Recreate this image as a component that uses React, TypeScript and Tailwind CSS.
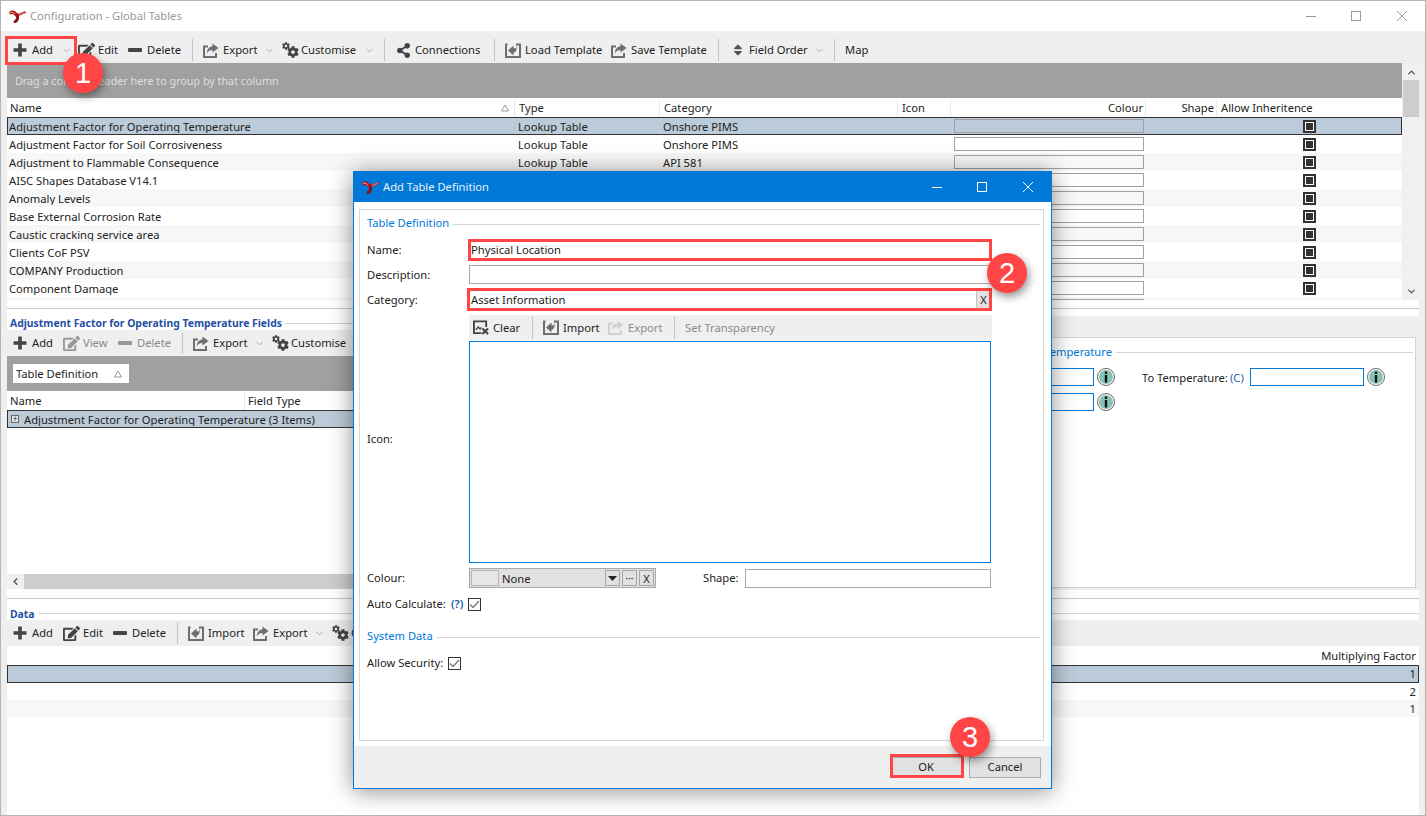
import React from "react";
import { ChevronDown, ChevronUp, ChevronLeft } from "lucide-react";
import { FaEdit, FaCog, FaShareAlt, FaSort } from "react-icons/fa";

const topCols = "grid-cols-[508px_145px_238px_53px_195px_71px_185px]";

const rows = [
  ["Adjustment Factor for Operating Temperature", "Lookup Table", "Onshore PIMS"],
  ["Adjustment Factor for Soil Corrosiveness", "Lookup Table", "Onshore PIMS"],
  ["Adjustment to Flammable Consequence", "Lookup Table", "API 581"],
  ["AISC Shapes Database V14.1", "Lookup Table", "Structural"],
  ["Anomaly Levels", "Lookup Table", "Inspection"],
  ["Base External Corrosion Rate", "Lookup Table", "API 581"],
  ["Caustic cracking service area", "Lookup Table", "Onshore PIMS"],
  ["Clients CoF PSV", "Lookup Table", "PSV"],
  ["COMPANY Production", "Lookup Table", "Production"],
  ["Component Damage", "Lookup Table", "API 581"],
  ["Component Types", "Lookup Table", "API 581"],
];

// Small hand drawn toolbar glyphs
const ExportIcon = ({ muted }: { muted?: boolean }) => (
  <svg width="16" height="15" viewBox="0 0 16 15" className={muted ? "text-[#b5b5b5]" : "text-[#6e6e6e]"}>
    <path d="M5 3.5H1v10.500h12v-4" fill="none" stroke="currentColor" strokeWidth="2" />
    <path d="M9.5 0.5 15.500 5 9.500 9.500V7C6.800 7 5 8 3.800 10.500 4 6.500 6 3.600 9.500 3.200Z" fill="currentColor" />
  </svg>
);

const LoadIcon = () => (
  <svg width="16" height="15" viewBox="0 0 16 15" className="text-[#6e6e6e]">
    <path d="M11 1.500h4v12.500H1V1.500h1.500" fill="none" stroke="currentColor" strokeWidth="2" />
    <path d="M3 7.500 8.500 2.500V5.300H11V2c1.500 4.500 0 7.300-2.500 7.700v2.800Z" fill="currentColor" />
  </svg>
);

const ClearIcon = () => (
  <svg width="17" height="15" viewBox="0 0 17 15" className="text-[#444]">
    <path d="M9 13.500H1V1h13v6" fill="none" stroke="currentColor" strokeWidth="2" />
    <path d="M3 10l2.500-3 2 2 1.500-1.500" fill="none" stroke="currentColor" strokeWidth="1.500" />
    <path d="M10 8.500l6 6M16 8.500l-6 6" stroke="currentColor" strokeWidth="2.200" />
  </svg>
);

const Logo = () => (
  <svg width="17" height="13" viewBox="0 0 17 13" className="shrink-0">
    <path d="M2 2.500C4 1.500 6 3 7.500 5" fill="none" stroke="#b8141c" strokeWidth="3.600" strokeLinecap="round" />
    <path d="M7.500 5C10 5.500 12.500 3.500 15.800 2.300" fill="none" stroke="#c8202a" strokeWidth="2.200" strokeLinecap="round" />
    <path d="M8.500 5C9 8 8.500 10.500 6 11.800" fill="none" stroke="#8e1016" strokeWidth="2.800" strokeLinecap="round" />
    <path d="M1.500 2.300C3 1.800 4.500 2.500 5.500 3.600" fill="none" stroke="#f4c4c6" strokeWidth="0.900" strokeLinecap="round" />
    <path d="M10 4.600C11.500 4.200 13 3.300 15 2.500" fill="none" stroke="#f4c4c6" strokeWidth="0.700" strokeLinecap="round" />
  </svg>
);

const InfoIcon = () => (
  <svg width="18" height="18" viewBox="0 0 18 18" className="shrink-0">
    <circle cx="9" cy="9" r="8.500" fill="#fff" stroke="#666" />
    <circle cx="9" cy="9" r="7" fill="#88c2b6" />
    <rect x="7.800" y="3.500" width="2.400" height="2.400" fill="#111" />
    <rect x="7.800" y="7" width="2.400" height="7.500" fill="#111" />
  </svg>
);

const SortArrow = () => (
  <svg width="8" height="8" viewBox="0 0 8 8">
    <path d="M4 1 7.500 7H.5Z" fill="#fff" stroke="#999" />
  </svg>
);

const WindowControls = ({ color }: { color: string }) => (
  <div className={`ml-auto flex items-center mr-[18px] ${color}`}>
    <div className="w-[10px] h-px bg-current" />
    <div className="ml-[35px] w-[10px] h-[10px] border border-current" />
    <svg width="10" height="10" viewBox="0 0 10 10" className="ml-[36px]">
      <path d="M0 0 10 10M10 0 0 10" stroke="currentColor" strokeWidth="1" />
    </svg>
  </div>
);

const Chevron = ({ className }: { className: string }) => (
  <ChevronDown size={11} strokeWidth={1.4} className={`ml-auto text-[#8a8a8a] ${className}`} />
);

interface ToolProps {
  icon: React.ReactNode;
  label: string;
  box?: string;
  width: string;
  chevron?: string;
  disabled?: boolean;
}

const Tool = ({ icon, label, box = "w-[16px]", width, chevron, disabled }: ToolProps) => (
  <div className={`flex items-center shrink-0 ${width}`}>
    <span className={`flex items-center shrink-0 ${box} ${disabled ? "opacity-50" : ""}`}>{icon}</span>
    <span className={`ml-[4px] whitespace-nowrap ${disabled ? "text-[#8a8a8a]" : ""}`}>{label}</span>
    {chevron && <Chevron className={chevron} />}
  </div>
);

const Sep = ({ after }: { after: string }) => <div className={`w-px h-[22px] bg-[#c4c4c4] shrink-0 ${after}`} />;

const Plus = () => (
  <svg width="14" height="14" viewBox="0 0 14 14" className="text-[#444]">
    <path d="M5.200 0.500h3.600v4.700h4.700v3.600H8.800v4.700H5.200V8.800H0.500V5.200h4.700Z" fill="currentColor" />
  </svg>
);
const Dash = () => (
  <svg width="14" height="4" viewBox="0 0 14 4" className="text-[#444]">
    <rect width="14" height="4" rx="1" fill="currentColor" />
  </svg>
);
const Edit = () => <FaEdit size={17} className="text-[#444] shrink-0" />;
const Cogs = () => (
  <svg width="17" height="16" viewBox="0 0 17 16" className="text-[#444] shrink-0">
    <FaCog size={8} x={0} y={0} />
    <FaCog size={12} x={5} y={4} />
  </svg>
);

const TopToolbar = () => (
  <div className="h-[32px] flex items-center pl-[12px] pt-[6px] shrink-0">
    <Tool icon={<Plus />} box="w-[15px]" label="Add" width="w-[65px]" chevron="mr-[6px]" />
    <Tool icon={<Edit />} label="Edit" width="w-[50px]" />
    <Tool icon={<Dash />} box="w-[15px]" label="Delete" width="w-[64px]" />
    <Sep after="mr-[10px]" />
    <Tool icon={<ExportIcon />} label="Export" width="w-[79px]" chevron="mr-[7px]" />
    <Tool icon={<Cogs />} box="w-[15px]" label="Customise" width="w-[102px]" chevron="mr-[9px]" />
    <Sep after="mr-[11px]" />
    <Tool icon={<FaShareAlt size={15} className="text-[#444]" />} box="w-[15px]" label="Connections" width="w-[98px]" />
    <Sep after="mr-[10px]" />
    <Tool icon={<LoadIcon />} label="Load Template" width="w-[106px]" />
    <Tool icon={<ExportIcon />} label="Save Template" width="w-[107px]" />
    <Sep after="mr-[14px]" />
    <Tool icon={<FaSort size={14} className="text-[#555] -ml-[2px] shrink-0" />} box="w-[12px]" label="Field Order" width="w-[101px]" chevron="mr-[9px]" />
    <Sep after="mr-[10px]" />
    <span>Map</span>
  </div>
);

const FieldsToolbar = () => (
  <div className="h-[26px] shrink-0 flex items-center pl-[6px] bg-[#efefef] overflow-hidden">
    <Tool icon={<Plus />} box="w-[15px]" label="Add" width="w-[50px]" />
    <Tool icon={<Edit />} label="View" width="w-[55px]" disabled />
    <Tool icon={<Dash />} box="w-[15px]" label="Delete" width="w-[64px]" disabled />
    <Sep after="mr-[10px]" />
    <Tool icon={<ExportIcon />} label="Export" width="w-[79px]" chevron="mr-[7px]" />
    <Tool icon={<Cogs />} box="w-[15px]" label="Customise" width="w-[102px]" />
  </div>
);

const DataToolbar = () => (
  <div className="h-[26px] flex items-center pl-[6px] shrink-0">
    <Tool icon={<Plus />} box="w-[15px]" label="Add" width="w-[50px]" />
    <Tool icon={<Edit />} label="Edit" width="w-[50px]" />
    <Tool icon={<Dash />} box="w-[15px]" label="Delete" width="w-[64px]" />
    <Sep after="mr-[10px]" />
    <Tool icon={<LoadIcon />} label="Import" width="w-[65px]" />
    <Tool icon={<ExportIcon />} label="Export" width="w-[79px]" chevron="mr-[7px]" />
    <Tool icon={<Cogs />} box="w-[15px]" label="Customise" width="w-[102px]" />
  </div>
);

const RowCheck = () => (
  <div className="w-[13px] h-[13px] border-2 border-[#333] bg-white flex items-center justify-center">
    <div className="w-[7px] h-[7px] bg-[#333]" />
  </div>
);

const TableRow = ({ row, index }: { row: string[]; index: number }) => {
  const selected = index === 0;
  const bg = selected ? "bg-[#bccbd9]" : index % 2 === 0 ? "bg-[#f7f7f7]" : "bg-white";
  return (
    <div className={`grid ${topCols} h-[18px] shrink-0 items-center relative ${bg}`}>
      <div className="pl-[2px] h-[14px] leading-[15px] overflow-hidden whitespace-nowrap">{row[0]}</div>
      <div className="pl-[3px] h-[14px] leading-[15px] overflow-hidden whitespace-nowrap">{row[1]}</div>
      <div className="pl-[3px] h-[14px] leading-[15px] overflow-hidden whitespace-nowrap">{row[2]}</div>
      <div />
      <div className="px-[3px]">
        <div className={`h-[14px] w-[190px] border border-[#a0a0a0] ${bg}`} />
      </div>
      <div />
      <div className="pl-[86px]">
        <RowCheck />
      </div>
      {selected && <div className="absolute inset-0 border border-[#333]" />}
    </div>
  );
};

const TopGrid = () => (
  <div className="h-[237px] flex shrink-0">
    <div className="w-[1395px] flex flex-col overflow-hidden bg-white">
      <div className="h-[35px] shrink-0 bg-[#a0a0a0] text-[#dedede] text-[10.75px] pl-[8px] pt-px flex items-center">
        Drag a column header here to group by that column
      </div>
      <div className={`grid ${topCols} h-[19px] shrink-0 bg-white items-stretch pt-px`}>
        <div className="pl-[3px] pr-[5px] border-r border-[#e8e8e8] flex items-center justify-between">
          <span>Name</span>
          <SortArrow />
        </div>
        <div className="pl-[4px] border-r border-[#e8e8e8] flex items-center">Type</div>
        <div className="pl-[4px] border-r border-[#e8e8e8] flex items-center">Category</div>
        <div className="pl-[4px] border-r border-[#e8e8e8] flex items-center">Icon</div>
        <div className="pr-[2px] border-r border-[#e8e8e8] flex items-center justify-end">Colour</div>
        <div className="pr-[2px] border-r border-[#e8e8e8] flex items-center justify-end">Shape</div>
        <div className="pl-[4px] flex items-center whitespace-nowrap">Allow Inheritence</div>
      </div>
      {rows.map((row, i) => (
        <TableRow key={row[0]} row={row} index={i} />
      ))}
    </div>
    <div className="w-[16px] ml-px bg-[#f0f0f0] flex flex-col items-center">
      <ChevronUp size={11} strokeWidth={3} className="text-[#555] mt-[4px]" />
      <div className="w-full h-[37px] bg-[#cdcdcd] mt-[2px]" />
      <ChevronDown size={11} strokeWidth={3} className="text-[#555] mt-auto mb-[3px]" />
    </div>
  </div>
);

const FieldsPane = () => (
  <div className="w-[360px] shrink-0 bg-white flex flex-col">
    <div className="h-[14px] shrink-0 flex items-center overflow-hidden">
      <span className="pl-[3px] pt-px font-bold text-[10.4px] text-[#1f4fa3] whitespace-nowrap">
        Adjustment Factor for Operating Temperature Fields
      </span>
      <div className="flex-1 h-px bg-[#d4d4d4] ml-[3px]" />
    </div>
    <FieldsToolbar />
    <div className="h-[35px] shrink-0 bg-[#a0a0a0] pl-[6px] flex items-center">
      <div className="w-[116px] h-[19px] bg-white flex items-center justify-between pl-[3px] pr-[7px]">
        <span>Table Definition</span>
        <SortArrow />
      </div>
    </div>
    <div className="h-[19px] shrink-0 flex pt-px">
      <div className="w-[238px] pl-[3px] border-r border-[#e8e8e8] flex items-center">Name</div>
      <div className="pl-[3px] flex items-center">Field Type</div>
    </div>
    <div className="h-[18px] shrink-0 bg-[#bccbd9] border border-[#333] flex items-center pl-[3px]">
      <div className="w-[8px] h-[8px] border border-[#666] bg-[#e8e8e8] flex items-center justify-center text-[8px] leading-none">
        +
      </div>
      <span className="ml-[5px] h-[14px] leading-[15px] overflow-hidden whitespace-nowrap">
        Adjustment Factor for Operating Temperature
      </span>
      <span className="ml-[3px] h-[14px] leading-[15px] overflow-hidden whitespace-nowrap">(3 Items)</span>
    </div>
    <div className="flex-1" />
    <div className="h-[15px] shrink-0 flex bg-[#f0f0f0] mb-px">
      <div className="w-[17px] flex items-center justify-center">
        <ChevronLeft size={11} strokeWidth={3} className="text-[#555]" />
      </div>
      <div className="flex-1 bg-[#cdcdcd]" />
    </div>
  </div>
);

const DetailPane = () => (
  <div className="flex-1 pt-[21px] pr-[3px]">
    <div className="h-[251px] bg-white border border-[#d4d4d4] pl-[6px] pr-[2px]">
      <div className="h-[28px] flex items-center">
        <span className="w-[738px] text-right text-[#0078d7] whitespace-nowrap">Adjustment Factor for Operating Temperature</span>
        <div className="flex-1 h-px bg-[#d4d4d4] ml-[4px]" />
      </div>
      <div className="flex items-center h-[18px] mt-[2px] pl-[606px]">
        <div className="w-[114px] h-[18px] border border-[#0078d7] shrink-0" />
        <span className="ml-[3px]"><InfoIcon /></span>
        <span className="ml-[27px] w-[88px] whitespace-nowrap pt-px">To Temperature:</span>
        <span className="text-[#1f5fa8] w-[20px] pt-px">(C)</span>
        <div className="w-[114px] h-[18px] border border-[#0078d7] shrink-0" />
        <span className="ml-[3px]"><InfoIcon /></span>
      </div>
      <div className="flex items-center h-[18px] mt-[7px] pl-[606px]">
        <div className="w-[114px] h-[18px] border border-[#0078d7] shrink-0" />
        <span className="ml-[3px]"><InfoIcon /></span>
      </div>
    </div>
  </div>
);

const DataGrid = () => (
  <div className="flex-1 bg-white flex flex-col">
    <div className="h-[19px] shrink-0 flex items-center justify-end pr-[3px]">Multiplying Factor</div>
    <div className="h-[18px] shrink-0 bg-[#bccbd9] border border-[#333] flex items-center justify-end pr-[2px]">1</div>
    <div className="h-[17px] shrink-0 flex items-center justify-end pr-[3px]">2</div>
    <div className="h-[17px] shrink-0 bg-[#f7f7f7] flex items-center justify-end pr-[3px]">1</div>
  </div>
);

const Legend = ({ title, className }: { title: string; className: string }) => (
  <div className={`flex items-center h-[14px] ${className}`}>
    <span className="text-[#0078d7] whitespace-nowrap">{title}</span>
    <div className="flex-1 h-px bg-[#d4d4d4] ml-[4px] mt-[2px]" />
  </div>
);

const FormRow = ({ label, className, children }: { label: string; className?: string; children: React.ReactNode }) => (
  <div className={`flex items-center ${className ?? ""}`}>
    <span className="w-[102px] shrink-0">{label}</span>
    {children}
  </div>
);

const DialogCheck = () => (
  <div className="w-[13px] h-[13px] border border-[#333] bg-white flex items-center justify-center shrink-0">
    <svg width="11" height="9" viewBox="0 0 11 9"><path d="M1 4.500 4 7.500 10 1" fill="none" stroke="#777" strokeWidth="1.300" /></svg>
  </div>
);

const Dialog = () => (
  <div className="absolute left-[352px] top-[170px] w-[699px] h-[618px] bg-white border border-[#0078d7] shadow-[0_2px_22px_rgba(0,0,0,0.45)] flex flex-col">
    <div className="h-[30px] shrink-0 bg-[#0078d7] flex items-center pl-[8px]">
      <Logo />
      <span className="ml-[4px] text-[#e8f2fb]">Add Table Definition</span>
      <WindowControls color="text-white" />
    </div>
    <div className="flex-1 pt-[7px] pl-[5px] pr-[7px] pb-[5px] bg-white">
      <div className="h-[532px] border border-[#d8d8d8] pl-[7px] pr-[3px] pt-[6px]">
        <Legend title="Table Definition" className="" />
        <FormRow label="Name:" className="mt-[10px]">
          <div className="w-[522px] h-[19px] border border-[#c4c4c4] pl-[1px] flex items-center">Physical Location</div>
        </FormRow>
        <FormRow label="Description:" className="mt-[6px]">
          <div className="w-[522px] h-[19px] border border-[#a8a8a8]" />
        </FormRow>
        <FormRow label="Category:" className="mt-[6px]">
          <div className="w-[522px] h-[19px] border border-[#0078d7] pl-[1px] flex items-center justify-between">
            <span>Asset Information</span>
            <div className="w-[14px] h-[17px] bg-[#e1e1e1] border-l border-[#c4c4c4] flex items-center justify-center text-[11px]">
              X
            </div>
          </div>
        </FormRow>
        <FormRow label="Icon:" className="mt-[6px]">
          <div className="w-[523px] shrink-0">
            <div className="h-[25px] bg-[#efefef] flex items-center pl-[4px]">
              <Tool icon={<ClearIcon />} label="Clear" width="w-[59px]" />
              <Sep after="mr-[10px]" />
              <Tool icon={<LoadIcon />} label="Import" width="w-[65px]" />
              <Tool icon={<ExportIcon muted />} label="Export" width="w-[66px]" disabled />
              <Sep after="mr-[10px]" />
              <span className="text-[#8a8a8a]">Set Transparency</span>
            </div>
            <div className="h-[222px] mt-px w-[522px] border border-[#0078d7]" />
          </div>
        </FormRow>
        <FormRow label="Colour:" className="mt-[5px]">
          <div className="w-[187px] h-[20px] bg-[#e1e1e1] border border-[#a8a8a8] flex items-center pl-[1px] shrink-0">
            <div className="w-[28px] h-[16px] bg-[#e6e6e6] border border-[#b8b8b8]" />
            <span className="ml-[3px] pt-px">None</span>
            <div className="ml-auto w-[15px] h-[16px] border border-[#a8a8a8] flex items-center justify-center">
              <svg width="9" height="5" viewBox="0 0 9 5"><path d="M0 0h9L4.500 5Z" fill="#222" /></svg>
            </div>
            <div className="ml-[2px] w-[15px] h-[16px] border border-[#a8a8a8] flex items-center justify-center text-[10px] leading-none">
              ···
            </div>
            <div className="ml-[2px] mr-[1px] w-[15px] h-[16px] border border-[#a8a8a8] flex items-center justify-center text-[11px]">
              X
            </div>
          </div>
          <span className="ml-[47px] w-[42px]">Shape:</span>
          <div className="w-[246px] h-[19px] border border-[#a8a8a8]" />
        </FormRow>
        <div className="flex items-center mt-[8px] h-[16px]">
          <span className="w-[84px] whitespace-nowrap">Auto Calculate:</span>
          <span className="w-[17px] text-[#1f5fa8] font-semibold">(?)</span>
          <DialogCheck />
        </div>
        <Legend title="System Data" className="mt-[17px]" />
        <div className="flex items-center mt-[12px] h-[16px]">
          <span className="w-[81px] whitespace-nowrap">Allow Security:</span>
          <DialogCheck />
        </div>
      </div>
    </div>
    <div className="h-[42px] shrink-0 bg-[#efefef] flex items-center justify-end pr-[10px] gap-[7px]">
      <div className="w-[72px] h-[21px] bg-[#e1e1e1] border border-[#adadad] flex items-center justify-center">OK</div>
      <div className="w-[72px] h-[21px] bg-[#e1e1e1] border border-[#adadad] flex items-center justify-center">Cancel</div>
    </div>
  </div>
);

const Callout = ({ n, className }: { n: number; className: string }) => (
  <div
    className={`absolute w-[40px] h-[40px] rounded-full bg-[#ff4545] text-white flex items-center justify-center text-[29px] font-['Liberation_Sans',sans-serif] shadow-[2px_4px_8px_rgba(0,0,0,0.4)] ${className}`}
  >
    {n}
  </div>
);

export default function App() {
  return (
    <div className="relative w-[1426px] h-[816px] overflow-hidden bg-[#efefef] border border-[#b4b4b4] flex flex-col text-[11.2px] leading-none text-[#222] font-['Noto_Sans',sans-serif]">
      <div className="h-[30px] shrink-0 bg-white flex items-center pl-[8px]">
        <Logo />
        <span className="ml-[4px] text-[#999]">Configuration - Global Tables</span>
        <WindowControls color="text-[#999]" />
      </div>
      <TopToolbar />
      <div className="flex-1 flex flex-col pl-[6px] pr-[6px]">
        <TopGrid />
        <div className="h-[16px] shrink-0 bg-white flex items-center">
          <div className="w-full h-px bg-[#c8c8c8]" />
        </div>
        <div className="h-[274px] shrink-0 flex">
          <FieldsPane />
          <DetailPane />
        </div>
        <div className="h-[30px] shrink-0 bg-white flex flex-col">
          <div className="h-px bg-[#c8c8c8] mt-[8px]" />
          <div className="flex items-center h-[14px] mt-[8px]">
            <span className="pl-[3px] pt-px font-bold text-[10.4px] text-[#1f4fa3]">Data</span>
            <div className="flex-1 h-px bg-[#d4d4d4] ml-[4px]" />
          </div>
        </div>
        <DataToolbar />
        <DataGrid />
      </div>

      <Dialog />

      {/* numbered step markers and their red boxes */}
      <div className="absolute left-[4px] top-[35px] w-[72px] h-[29px] border-[3px] border-[#ff4545]" />
      <div className="absolute left-[467px] top-[238px] w-[524px] h-[22px] border-[3px] border-[#ff4545]" />
      <div className="absolute left-[466px] top-[287px] w-[525px] h-[23px] border-[3px] border-[#ff4545]" />
      <div className="absolute left-[889px] top-[753px] w-[74px] h-[24px] border-[3px] border-[#ff4545]" />
      <Callout n={1} className="left-[62px] top-[52px]" />
      <Callout n={2} className="left-[986px] top-[252px]" />
      <Callout n={3} className="left-[949px] top-[716px]" />
    </div>
  );
}
